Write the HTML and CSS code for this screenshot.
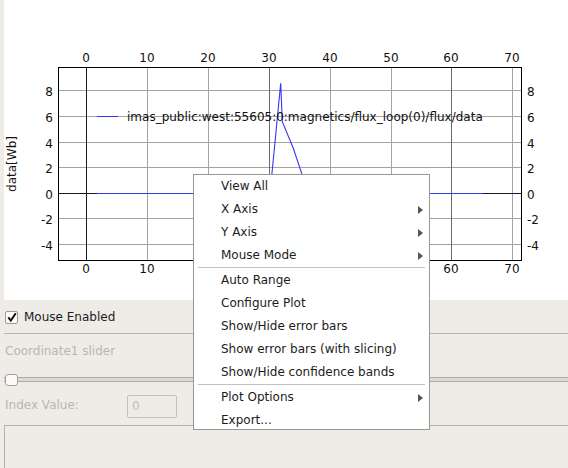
FILE: index.html
```html
<!DOCTYPE html>
<html>
<head>
<meta charset="utf-8">
<link rel="stylesheet" href="styles.css">
</head>
<body>
<div class="window">
  <div class="plot-area">
    <svg class="plot" width="564" height="300" viewBox="4 0 564 300" xmlns="http://www.w3.org/2000/svg">
      <g class="grid">
        <line x1="147.5" y1="67" x2="147.5" y2="260"/>
        <line x1="208.5" y1="67" x2="208.5" y2="260"/>
        <line x1="330.5" y1="67" x2="330.5" y2="260"/>
        <line x1="391.5" y1="67" x2="391.5" y2="260"/>
        <line x1="512.5" y1="67" x2="512.5" y2="260"/>
        <line x1="58" y1="90.5" x2="521" y2="90.5"/>
        <line x1="58" y1="116.5" x2="521" y2="116.5"/>
        <line x1="58" y1="142.5" x2="521" y2="142.5"/>
        <line x1="58" y1="167.5" x2="521" y2="167.5"/>
        <line x1="58" y1="218.5" x2="521" y2="218.5"/>
        <line x1="58" y1="244.5" x2="521" y2="244.5"/>
      </g>
      <g class="grid-mid">
        <line x1="269.5" y1="67" x2="269.5" y2="260"/>
        <line x1="451.5" y1="67" x2="451.5" y2="260"/>
      </g>
      <g class="grid-zero">
        <line x1="86.5" y1="67" x2="86.5" y2="260"/>
        <line x1="58" y1="193.5" x2="521" y2="193.5"/>
      </g>
      <polyline class="curve" points="97,193.5 270,193.5 280.7,83.3 282.3,121.7 293.3,148.3 301.7,173.3 304,182 306,193.5 483,193.5"/>
      <rect class="frame" x="58.5" y="67.5" width="463" height="193"/>
      <g class="ticks-top">
        <text x="86" y="62">0</text>
        <text x="147" y="62">10</text>
        <text x="208" y="62">20</text>
        <text x="269" y="62">30</text>
        <text x="330" y="62">40</text>
        <text x="391" y="62">50</text>
        <text x="451" y="62">60</text>
        <text x="512" y="62">70</text>
      </g>
      <g class="ticks-top">
        <text x="86" y="273">0</text>
        <text x="147" y="273">10</text>
        <text x="451" y="273">60</text>
        <text x="512" y="273">70</text>
      </g>
      <g class="ticks-left">
        <text x="53" y="96">8</text>
        <text x="53" y="121.5">6</text>
        <text x="53" y="147.5">4</text>
        <text x="53" y="173">2</text>
        <text x="53" y="198.5">0</text>
        <text x="53" y="224">-2</text>
        <text x="53" y="249.5">-4</text>
      </g>
      <g class="ticks-right">
        <text x="527" y="96">8</text>
        <text x="527" y="121.5">6</text>
        <text x="527" y="147.5">4</text>
        <text x="527" y="173">2</text>
        <text x="527" y="198.5">0</text>
        <text x="527" y="224">-2</text>
        <text x="527" y="249.5">-4</text>
      </g>
      <text class="ylabel" transform="translate(16,164) rotate(-90)">data[Wb]</text>
      <line class="legend-line" x1="97" y1="116.5" x2="118" y2="116.5"/>
      <text class="legend" x="127" y="121">imas_public:west:55605:0:magnetics/flux_loop(0)/flux/data</text>
    </svg>
  </div>
  <div class="controls">
    <div class="check-row">
      <span class="checkbox"><svg width="12" height="12" viewBox="0 0 12 12"><path d="M2.3 6.3 L4.8 9.6 L9.8 2.2" fill="none" stroke="#111" stroke-width="2"/></svg></span>
      <span class="check-label">Mouse Enabled</span>
    </div>
    <div class="hsep"></div>
    <div class="slider-label">Coordinate1 slider</div>
    <div class="slider-row">
      <div class="groove"></div>
      <div class="handle"></div>
    </div>
    <div class="index-row">
      <span class="index-label">Index Value:</span>
      <span class="index-input">0</span>
    </div>
    <div class="bottom-box"></div>
  </div>
</div>
<div class="menu">
  <div class="item">View All</div>
  <div class="item sub">X Axis</div>
  <div class="item sub">Y Axis</div>
  <div class="item sub">Mouse Mode</div>
  <div class="msep"></div>
  <div class="item">Auto Range</div>
  <div class="item">Configure Plot</div>
  <div class="item">Show/Hide error bars</div>
  <div class="item">Show error bars (with slicing)</div>
  <div class="item">Show/Hide confidence bands</div>
  <div class="msep"></div>
  <div class="item sub">Plot Options</div>
  <div class="item">Export...</div>
</div>
</body>
</html>
```
FILE: styles.css
```css
html, body {
  margin: 0;
  padding: 0;
}
body {
  width: 568px;
  height: 468px;
  overflow: hidden;
  background: #efebe7;
  font-family: "DejaVu Sans", "Noto Sans", sans-serif;
  font-size: 12px;
  color: #1c1c1c;
  position: relative;
}
.window {
  padding-left: 4px;
  height: 468px;
  display: flex;
  flex-direction: column;
}
.plot-area {
  height: 300px;
  background: #ffffff;
  flex: none;
}
.plot {
  display: block;
}
.plot text {
  font-family: "DejaVu Sans", sans-serif;
  font-size: 12px;
  fill: #111;
}
.grid line {
  stroke: #a3a3a3;
  stroke-width: 1;
}
.grid-mid line {
  stroke: #6a6a6a;
  stroke-width: 1;
}
.grid-zero line {
  stroke: #1a1a1a;
  stroke-width: 1;
}
.frame {
  fill: none;
  stroke: #000;
  stroke-width: 1;
}
.curve {
  fill: none;
  stroke: #3535f5;
  stroke-width: 1.1;
}
.legend-line {
  stroke: #3535f5;
  stroke-width: 1;
}
.ticks-top text {
  text-anchor: middle;
}
.ticks-left text {
  text-anchor: end;
}
.ticks-right text {
  text-anchor: start;
}
.ylabel {
  text-anchor: middle;
}
.controls {
  flex: 1;
  display: flex;
  flex-direction: column;
}
.check-row {
  height: 33px;
  display: flex;
  align-items: center;
  padding-left: 1px;
  gap: 6px;
}
.checkbox {
  width: 11px;
  height: 11px;
  border: 1px solid #9d9995;
  border-radius: 2px;
  background: #fbfbfa;
  display: flex;
  align-items: center;
  justify-content: center;
  margin-top: 1px;
}
.checkbox svg {
  display: block;
  flex: none;
}
.hsep {
  height: 1px;
  background: #bab6b2;
}
.slider-label {
  height: 34px;
  display: flex;
  align-items: center;
  padding-left: 1px;
  color: #bab6b2;
}
.slider-row {
  height: 23px;
  position: relative;
  display: flex;
  align-items: center;
}
.groove {
  flex: 1;
  height: 3px;
  border-top: 1px solid #aeaaa6;
  border-bottom: 1px solid #aeaaa6;
  background: #dcd8d4;
}
.handle {
  position: absolute;
  left: 1px;
  top: 6px;
  width: 11px;
  height: 10px;
  border: 1px solid #a4a09c;
  border-radius: 3px;
  background: #fafaf9;
}
.index-row {
  height: 31px;
  display: flex;
  align-items: center;
}
.index-label {
  width: 122px;
  padding-left: 1px;
  color: #bab6b2;
  margin-top: -3px;
}
.index-input {
  box-sizing: border-box;
  width: 50px;
  height: 23px;
  border: 1px solid #c4c0bc;
  border-radius: 2px;
  padding-left: 4px;
  line-height: 21px;
  color: #c0bcb8;
  background: #efebe7;
}
.bottom-box {
  margin-top: 3px;
  flex: 1;
  border-top: 1px solid #b4b0ac;
  border-left: 1px solid #b4b0ac;
}
.menu {
  position: absolute;
  left: 193px;
  top: 174px;
  width: 237px;
  height: 256px;
  box-sizing: border-box;
  border: 1px solid #9a9692;
  background: #ffffff;
  overflow: hidden;
}
.item {
  height: 23px;
  line-height: 23px;
  padding-left: 27px;
  position: relative;
  color: #1c1c1c;
  white-space: nowrap;
}
.sub::after {
  content: "";
  position: absolute;
  right: 6px;
  top: 8px;
  width: 0;
  height: 0;
  border-left: 5px solid #555555;
  border-top: 4px solid transparent;
  border-bottom: 4px solid transparent;
}
.msep {
  height: 1px;
  margin: 0 4px 1px 4px;
  background: #c4c0bc;
}
```
